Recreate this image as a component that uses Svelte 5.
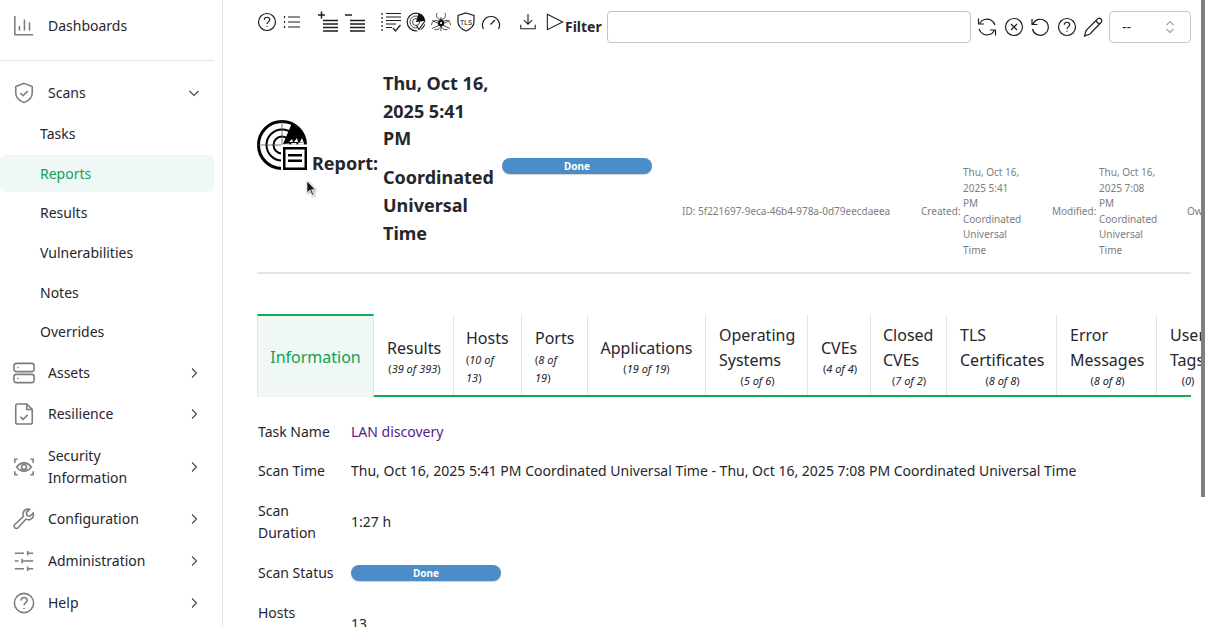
<script>
  const tabs = [
    { l: ['Information'], active: true },
    { l: ['Results'], c: '39 of 393' },
    { l: ['Hosts'], c: '10 of 13' },
    { l: ['Ports'], c: '8 of 19' },
    { l: ['Applications'], c: '19 of 19' },
    { l: ['Operating', 'Systems'], c: '5 of 6' },
    { l: ['CVEs'], c: '4 of 4' },
    { l: ['Closed', 'CVEs'], c: '7 of 2' },
    { l: ['TLS', 'Certificates'], c: '8 of 8' },
    { l: ['Error', 'Messages'], c: '8 of 8' },
    { l: ['User', 'Tags'], c: '0' }
  ];
  const subs = ['Tasks', 'Reports', 'Results', 'Vulnerabilities', 'Notes', 'Overrides'];
  const date = 'Thu, Oct 16, 2025 5:41 PM Coordinated Universal Time';
  const date2 = 'Thu, Oct 16, 2025 7:08 PM Coordinated Universal Time';
</script>

{#snippet chevron()}
  <svg class="chev" viewBox="0 0 12 12"><path d="M4 1.500 8.500 6 4 10.500" /></svg>
{/snippet}

<div class="page">
  <aside class="side">
    <a class="item first">
      <svg class="ic" viewBox="0 0 24 24"><path d="M2 1v20.500h20M7 17v-5M12.500 17V5M18 17V8" /></svg>
      <span>Dashboards</span>
    </a>
    <hr class="sep" />
    <a class="item scans">
      <svg class="ic" viewBox="0 0 24 24"><path d="M12 1.500 21 5v7c0 5.500-4 8.500-9 10.500C7 20.500 3 17.500 3 12V5ZM8 12l3 3 5-5" /></svg>
      <span class="grow">Scans</span>
      <svg class="chev" viewBox="0 0 12 12"><path d="M1.500 4 6 8.500 10.500 4" /></svg>
    </a>
    <div class="subs">
      {#each subs as s}
        <a class="sub" class:on={s === 'Reports'}>{s}</a>
      {/each}
    </div>
    <a class="item assets">
      <svg class="ic" viewBox="0 0 24 24"><rect x="1" y="1.500" width="22" height="9" rx="2.500" /><rect x="1" y="13.500" width="22" height="9" rx="2.500" /><path d="M4.500 6h1.500M4.500 18h1.500" /></svg>
      <span class="grow">Assets</span>{@render chevron()}
    </a>
    <a class="item res">
      <svg class="ic" viewBox="0 0 24 24"><path d="M5 1h10l6 6v14c0 1-1 2-2 2H5c-1 0-2-1-2-2V3c0-1 1-2 2-2ZM15 1v6h6M8 15l3 3 5-5" /></svg>
      <span class="grow">Resilience</span>{@render chevron()}
    </a>
    <a class="item sec">
      <svg class="ic" viewBox="0 0 24 24"><path d="M5 3.500H2v4M19 3.500h3v4M5 20.500H2v-4M19 20.500h3v-4" /><path d="M4 12c4.500-6 11.500-6 16 0-4.500 6-11.500 6-16 0Z" /><circle cx="12" cy="12" r="2.800" /></svg>
      <span class="grow">Security<br />Information</span>{@render chevron()}
    </a>
    <a class="item conf">
      <svg class="ic" viewBox="0 0 24 24"><path d="M22 5.500c.8 3-.4 5.500-2.700 6.700-1.700.8-3.500.7-5-.1L5.500 21.500c-1 1-2.500 1-3.500 0s-1-2.500 0-3.500l9.500-8.800c-.8-1.500-.9-3.300-.1-5C12.600 2 15 .8 18 1.500L14.500 5l.8 3.200 3.200.8Z" /></svg>
      <span class="grow">Configuration</span>{@render chevron()}
    </a>
    <a class="item adm">
      <svg class="ic" viewBox="0 0 24 24"><path d="M2 3.500h10M16 3.500h6M16 1v5M2 12h4M10 12h12M10 9.500v5M2 20.500h10M16 20.500h6M16 18v5" /></svg>
      <span class="grow">Administration</span>{@render chevron()}
    </a>
    <a class="item help">
      <svg class="ic" viewBox="0 0 24 24"><circle cx="12" cy="12" r="10.500" /><path d="M8.800 9.200c0-4.300 6.600-4.300 6.600 0 0 2.600-3.400 2.600-3.400 5.300M12 17.500v1" /></svg>
      <span class="grow">Help</span>{@render chevron()}
    </a>
  </aside>

  <main class="main">
    <div class="toolbar">
      <div class="grp g1">
        <svg class="t" viewBox="0 0 20 20"><circle cx="10" cy="10" r="8.500" /><path d="M7.300 7.800c0-3.400 5.400-3.400 5.400 0 0 2.100-2.700 2.100-2.700 4.200M10 13.800v1" /></svg>
        <svg class="t" viewBox="0 0 20 20"><path d="M5 5h12M5 10h12M5 15h12" /><path d="M1.500 4v2M1.500 9v2M1.500 14v2" /></svg>
      </div>
      <div class="grp g2">
        <svg class="t" viewBox="0 0 20 20"><path class="thick" d="M1 3h7M4.500 -.5v7M6 8.500h15M6 12h15M6 15.500h15M6 19h15" /></svg>
        <svg class="t" viewBox="0 0 20 20"><path class="thick" d="M0 3h7M5 8.500h15M5 12h15M5 15.500h15M5 19h15" /></svg>
      </div>
      <div class="grp g3">
        <svg class="t" viewBox="0 0 20 20"><path d="M5 1.500h15M5 5h15M5 8.500h15M5 12h10M5 15.500h6M12 16l2.500 3 5-6" /><path d="M1 1v2M1 5v2M1 9v2M1 13v2M1 17v2" /></svg>
        <svg class="t" viewBox="0 0 20 20"><circle cx="10" cy="10" r="8.800" /><circle class="thin" cx="10" cy="10" r="6" /><circle class="thin" cx="10" cy="10" r="3.500" /><path class="fill" d="M10 10 12.500 1.500a9 9 0 0 1 6.500 7.500Z" /><path class="knockw" d="M10 18l3 2 7-10-4-1Z" /><path d="M10.500 13.500l2.500 4 5.500-8" /></svg>
        <svg class="t" viewBox="0 0 20 20"><path class="thin" d="M6 1C4.500 5 7 7.500 10 7.500S15.500 5 14 1M.5 13C1 9 4 7.500 7 9M19.500 13C19 9 16 7.500 13 9M10 12.500c0 3.500-3 6-6.500 5M10 12.500c0 3.500 3 6 6.500 5M1 8.500l18 8M19 8.500l-18 8M10 5v14" /><circle class="fill" cx="10" cy="11" r="3.200" /><circle class="knockw" cx="10" cy="11" r="1.100" /></svg>
        <svg class="t" viewBox="0 0 20 20"><path d="M10 1 18 3.500V10c0 4.500-3.500 7-8 9-4.500-2-8-4.500-8-9V3.500Z" /><text x="10" y="12.500" class="tls">TLS</text></svg>
        <svg class="t" viewBox="0 0 20 20"><path d="M2.500 17a8.500 8.500 0 1 1 15 0M9.500 12.500 14 8" /></svg>
      </div>
      <div class="grp g4">
        <svg class="t dl" viewBox="0 0 20 20"><path d="M10 1v11M5.500 8l4.500 4.500L14.500 8M2 13v4.500h16V13" /></svg>
        <svg class="t pl" viewBox="0 0 20 20"><path d="M1.500 1.500 18.500 10 1.500 18.500Z" /></svg>
      </div>
      <span class="flabel">Filter</span>
      <input class="finput" type="text" />
      <div class="grp g5">
        <svg class="t" viewBox="0 0 20 20"><path d="M18 8C16.500 3.500 12 1 7.500 2.500 5.500 3.100 3.800 4.500 2.800 6.300M1.500 1.500v5.500H7M2 12c1.500 4.500 6 7 10.500 5.500 2-.6 3.700-2 4.700-3.800M18.500 18.500V13H13" /></svg>
        <svg class="t" viewBox="0 0 20 20"><circle cx="10" cy="10" r="8.500" /><path d="M7 7l6 6M13 7l-6 6" /></svg>
        <svg class="t" viewBox="0 0 20 20"><path d="M3 7a8 8 0 1 1-.5 5M2 2v5.500h5.500" /></svg>
        <svg class="t" viewBox="0 0 20 20"><circle cx="10" cy="10" r="8.500" /><path d="M7.300 7.800c0-3.400 5.400-3.400 5.400 0 0 2.100-2.700 2.100-2.700 4.200M10 13.800v1" /></svg>
        <svg class="t" viewBox="0 0 20 20"><path d="M15 1.500c1-.7 2-.5 3 .5s1.200 2 .5 3L7 17l-5.500 2L3 13.500ZM13 4l3.500 3.500" /></svg>
      </div>
      <div class="sel"><span>--</span>
        <svg viewBox="0 0 10 16"><path d="M1.500 6 5 2.500 8.500 6M1.500 10 5 13.500 8.500 10" /></svg>
      </div>
    </div>

    <header class="head">
      <svg class="radar" viewBox="0 0 50 50">
        <circle cx="25" cy="25" r="23.500" class="r3" />
        <circle cx="25" cy="25" r="15.500" class="r2" />
        <circle cx="25" cy="25" r="8.500" class="r2" />
        <path class="r1" d="M25 1v48M1 25h48" />
        <path class="blk" d="M26 24 35 3a23.500 23.500 0 0 1 13.500 19Z" />
        <path class="wh" d="M32 22l3-3 1 3ZM37 22l3-4 1 4ZM43 22l2-4 1.500 4Z" />
        <rect x="24" y="24.500" width="26" height="25.500" class="wh" />
        <path class="blk" d="M26 27h24v23H26ZM28.500 29.500v18h19v-18Z" />
        <path class="blk" d="M31 34h14v2.500H31ZM31 39.500h14V42H31Z" />
      </svg>
      <strong class="rep">Report:</strong>
      <div class="title">
        <p>Thu, Oct 16, 2025 5:41 PM</p>
        <p>Coordinated Universal Time</p>
      </div>
      <div class="bar hb">Done</div>
      <div class="meta">
        <span class="id">ID: 5f221697-9eca-46b4-978a-0d79eecdaeea</span>
        <span class="ml cr">Created:</span><span class="dt d1">{date}</span>
        <span class="ml mo">Modified:</span><span class="dt d2">{date2}</span>
        <span class="ml ow">Ow</span>
      </div>
    </header>
    <hr class="rule" />

    <nav class="tabs">
      {#each tabs as t}
        <div class="tab" class:active={t.active}>
          <span class="tl">{#each t.l as p, i}{#if i}<br />{/if}{p}{/each}</span>
          {#if t.c}<small>(<i>{t.c}</i>)</small>{/if}
        </div>
      {/each}
    </nav>

    <dl class="info">
      <dt>Task Name</dt><dd><a class="link">LAN discovery</a></dd>
      <dt>Scan Time</dt><dd>Thu, Oct 16, 2025 5:41 PM Coordinated Universal Time - Thu, Oct 16, 2025 7:08 PM Coordinated Universal Time</dd>
      <dt>Scan Duration</dt><dd>1:27 h</dd>
      <dt>Scan Status</dt><dd><div class="bar">Done</div></dd>
      <dt>Hosts scanned</dt><dd>13</dd>
    </dl>
  </main>

  <div class="thumb"></div>
  <svg class="cursor" viewBox="0 0 14 20"><path d="M1 1v14l3.500-3 2.500 6 2-1-2.500-5.500H11Z" /></svg>
</div>

<style>
  :global(html), :global(body) { margin: 0; height: 100%; overflow: hidden; background: #fff; }
  .page {
    position: relative; display: flex; width: 1205px; height: 627px; overflow: hidden;
    font: 14px/22px "Noto Sans", sans-serif; color: #26262c;
  }
  .side { width: 222px; flex: none; border-right: 1px solid #e4e4e4; }
  .item { display: flex; align-items: center; padding: 0 22px 0 13px; gap: 13px; }
  .ic { width: 22px; height: 22px; flex: none; fill: none; stroke: #7c7c7c; stroke-width: 1.700; }
  .grow { flex: 1; }
  .chev { width: 12px; height: 12px; flex: none; fill: none; stroke: #44444a; stroke-width: 1.100; }
  .first { margin-top: 15px; }
  .sep { margin: 23px 8px 0 0; border: 0; border-top: 1px solid #e4e4e4; }
  .scans { margin-top: 21px; }
  .subs { margin-top: 11px; display: flex; flex-direction: column; width: 214px; }
  .sub { display: block; height: 37px; line-height: 37px; padding-left: 40px; margin-bottom: 2.700px; border-radius: 5px; }
  .sub.on { background: #f0f8f5; color: #11a054; }
  .assets { margin-top: 9px; }
  .res { margin-top: 19px; }
  .sec { margin-top: 20px; }
  .conf { margin-top: 19px; }
  .adm { margin-top: 20px; }
  .help { margin-top: 20px; }

  .main { flex: 1; min-width: 0; padding: 11px 0 0 34px; }
  .toolbar { display: flex; align-items: flex-start; height: 32px; margin-bottom: 26px; width: 934px; }
  .grp { display: flex; margin-top: 1px; flex: none; }
  .t { width: 20px; height: 20px; flex: none; fill: none; stroke: #1d1d1d; stroke-width: 1.200; overflow: visible; }
  .thick { stroke-width: 1.500; }
  .thin { stroke-width: .8; }
  .fill { fill: #111; stroke: none; }
  .knockw { fill: #fff; stroke: none; }
  .tls { font: 7.500px "Noto Sans", sans-serif; fill: #222; stroke: none; text-anchor: middle; }
  .g1 { gap: 6px; width: 60px; }
  .g2 { gap: 8px; width: 64px; }
  .g3 { gap: 5px; width: 138px; }
  .g4 { gap: 9px; width: 46px; }
  .dl, .pl { width: 18px; height: 18px; margin-top: 1px; }
  .flabel { font-weight: 700; line-height: 32px; width: 42px; flex: none; }
  .finput { width: 364px; height: 32px; box-sizing: border-box; border: 1px solid #c4c4c4; border-radius: 4px; padding: 0; flex: none; background: #fff; margin: 0; }
  .g5 { gap: 6.500px; margin: 6px 0 0 6px; }
  .sel { margin-left: 6px; width: 82px; height: 32px; box-sizing: border-box; border: 1px solid #c8c8c8; border-radius: 4px; flex: none; display: flex; justify-content: space-between; align-items: center; padding: 0 15px 0 12px; }
  .sel svg { width: 10px; height: 16px; fill: none; stroke: #a0a0a0; stroke-width: 1.100; }

  .head { display: flex; align-items: flex-start; height: 203px; white-space: nowrap; overflow: hidden; }
  .radar { width: 50px; height: 50px; flex: none; margin: 51px 5px 0 0; }
  .r3 { fill: none; stroke: #000; stroke-width: 3; }
  .r2 { fill: none; stroke: #000; stroke-width: 2; }
  .r1 { stroke: #555; stroke-width: .8; }
  .blk { fill: #000; fill-rule: evenodd; }
  .wh { fill: #fff; }
  .rep { font-size: 18px; line-height: 28px; width: 71px; flex: none; margin-top: 80px; }
  .title { width: 113px; flex: none; white-space: normal; font-size: 18px; font-weight: 700; line-height: 27.700px; margin: 1px 6px 0 0; }
  .title p { margin: 0 0 11px; }
  .bar { background: #4c8dc9; color: #fff; font-size: 10px; font-weight: 700; line-height: 16px; height: 16px; border-radius: 8px; width: 150px; text-align: center; flex: none; box-shadow: 0 1px 1px rgba(0,0,0,.18); }
  .hb { margin-top: 89px; }
  .meta { display: flex; align-items: center; flex: none; margin: 96px 0 0 30px; font-size: 10px; line-height: 15.600px; color: #7d7d7d; }
  .id { width: 239px; flex: none; }
  .ml { flex: none; }
  .cr { width: 42px; }
  .mo { width: 47px; }
  .dt { white-space: normal; width: 60px; flex: none; }
  .d1 { margin-right: 29px; }
  .d2 { margin-right: 28px; }
  .rule { margin: 0; border: 0; border-top: 2px solid #e4e4e4; width: 934px; }

  .tabs { display: flex; margin-top: 40px; width: 934px; border-bottom: 2px solid #11ab51; height: 81px; align-items: stretch; }
  .tab { box-sizing: border-box; flex: none; border-right: 1px solid #e4e4e4; border-top: 1px solid #fff; display: flex; flex-direction: column; justify-content: center; align-items: center; font-size: 16px; line-height: 25px; padding: 2px 11px 0 13px; white-space: nowrap; }
  .tl { align-self: flex-start; }
  .tab:nth-child(1) { width: 117px; border-left: 1px solid #e4e4e4; border-top: 2px solid #11ab51; background: #f0f8f5; color: #11a054; height: 83px; padding-left: 12px; padding-right: 12px; }
  .tab:nth-child(1) .tl { align-self: center; }
  .tab:nth-child(2) { width: 80px; }
  .tab:nth-child(3) { width: 68px; padding-left: 12px; }
  .tab:nth-child(4) { width: 66px; }
  .tab:nth-child(5) { width: 118px; padding-left: 12px; padding-right: 12px; }
  .tab:nth-child(5) .tl { align-self: center; }
  .tab:nth-child(6) { width: 102px; }
  .tab:nth-child(7) { width: 63px; }
  .tab:nth-child(8) { width: 76px; padding-left: 12px; }
  .tab:nth-child(9) { width: 110px; }
  .tab:nth-child(10) { width: 100px; }
  .tab:nth-child(11) { width: 60px; border-right: 0; }
  .tab:nth-child(3) small, .tab:nth-child(4) small { white-space: normal; align-self: flex-start; max-width: 34px; line-height: 18px; }
  small { font-size: 11px; line-height: 16px; }

  .info { display: grid; grid-template-columns: 93px 1fr; row-gap: 17.800px; margin: 23.700px 0 0; padding-left: 1px; align-items: center; }
  dt { margin: 0; max-width: 84px; }
  dd { margin: 0; }
  .link { color: #551a8b; }
  .thumb { position: absolute; right: 0; top: 0; width: 4px; height: 497px; background: #808080; }
  .cursor { position: absolute; left: 306px; top: 179px; width: 12px; height: 19px; fill: #111; stroke: #fff; stroke-width: 1; filter: drop-shadow(1px 1px 1px rgba(0,0,0,.4)); }
</style>
